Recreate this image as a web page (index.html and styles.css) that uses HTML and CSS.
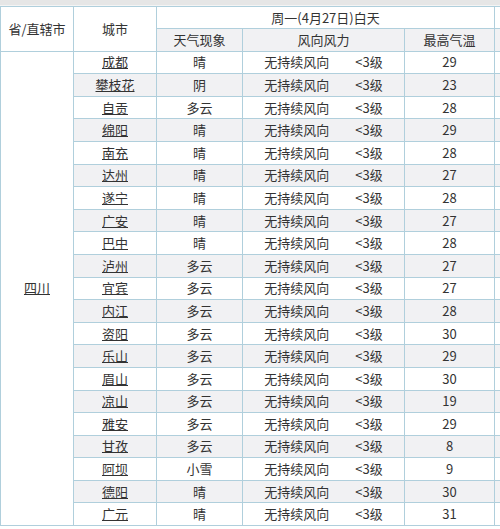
FILE: index.html
```html
<!DOCTYPE html>
<html lang="zh">
<head>
<meta charset="utf-8">
<link rel="stylesheet" href="styles.css">
</head>
<body>
<div class="frame">
<div class="strip"></div>
<table class="weather">
  <colgroup>
    <col class="c-prov"><col class="c-city"><col class="c-wx"><col class="c-wind"><col class="c-temp"><col class="c-next">
  </colgroup>
  <thead>
    <tr class="h1">
      <th rowspan="2" class="white">省/直辖市</th>
      <th rowspan="2" class="white">城市</th>
      <th colspan="3" class="white">周一(4月27日)白天</th>
      <th class="white"></th>
    </tr>
    <tr class="h2">
      <th>天气现象</th>
      <th>风向风力</th>
      <th>最高气温</th>
      <th></th>
    </tr>
  </thead>
  <tbody>
    <tr><td rowspan="21" class="prov"><a href="#">四川</a></td><td><a href="#">成都</a></td><td>晴</td><td class="wind"><span class="dir">无持续风向</span><span>&lt;3级</span></td><td>29</td><td></td></tr>
    <tr class="alt"><td><a href="#">攀枝花</a></td><td>阴</td><td class="wind"><span class="dir">无持续风向</span><span>&lt;3级</span></td><td>23</td><td></td></tr>
    <tr><td><a href="#">自贡</a></td><td>多云</td><td class="wind"><span class="dir">无持续风向</span><span>&lt;3级</span></td><td>28</td><td></td></tr>
    <tr class="alt"><td><a href="#">绵阳</a></td><td>晴</td><td class="wind"><span class="dir">无持续风向</span><span>&lt;3级</span></td><td>29</td><td></td></tr>
    <tr><td><a href="#">南充</a></td><td>晴</td><td class="wind"><span class="dir">无持续风向</span><span>&lt;3级</span></td><td>28</td><td></td></tr>
    <tr class="alt"><td><a href="#">达州</a></td><td>晴</td><td class="wind"><span class="dir">无持续风向</span><span>&lt;3级</span></td><td>27</td><td></td></tr>
    <tr><td><a href="#">遂宁</a></td><td>晴</td><td class="wind"><span class="dir">无持续风向</span><span>&lt;3级</span></td><td>28</td><td></td></tr>
    <tr class="alt"><td><a href="#">广安</a></td><td>晴</td><td class="wind"><span class="dir">无持续风向</span><span>&lt;3级</span></td><td>27</td><td></td></tr>
    <tr><td><a href="#">巴中</a></td><td>晴</td><td class="wind"><span class="dir">无持续风向</span><span>&lt;3级</span></td><td>28</td><td></td></tr>
    <tr class="alt"><td><a href="#">泸州</a></td><td>多云</td><td class="wind"><span class="dir">无持续风向</span><span>&lt;3级</span></td><td>27</td><td></td></tr>
    <tr><td><a href="#">宜宾</a></td><td>多云</td><td class="wind"><span class="dir">无持续风向</span><span>&lt;3级</span></td><td>27</td><td></td></tr>
    <tr class="alt"><td><a href="#">内江</a></td><td>多云</td><td class="wind"><span class="dir">无持续风向</span><span>&lt;3级</span></td><td>28</td><td></td></tr>
    <tr><td><a href="#">资阳</a></td><td>多云</td><td class="wind"><span class="dir">无持续风向</span><span>&lt;3级</span></td><td>30</td><td></td></tr>
    <tr class="alt"><td><a href="#">乐山</a></td><td>多云</td><td class="wind"><span class="dir">无持续风向</span><span>&lt;3级</span></td><td>29</td><td></td></tr>
    <tr><td><a href="#">眉山</a></td><td>多云</td><td class="wind"><span class="dir">无持续风向</span><span>&lt;3级</span></td><td>30</td><td></td></tr>
    <tr class="alt"><td><a href="#">凉山</a></td><td>多云</td><td class="wind"><span class="dir">无持续风向</span><span>&lt;3级</span></td><td>19</td><td></td></tr>
    <tr><td><a href="#">雅安</a></td><td>多云</td><td class="wind"><span class="dir">无持续风向</span><span>&lt;3级</span></td><td>29</td><td></td></tr>
    <tr class="alt"><td><a href="#">甘孜</a></td><td>多云</td><td class="wind"><span class="dir">无持续风向</span><span>&lt;3级</span></td><td>8</td><td></td></tr>
    <tr><td><a href="#">阿坝</a></td><td>小雪</td><td class="wind"><span class="dir">无持续风向</span><span>&lt;3级</span></td><td>9</td><td></td></tr>
    <tr class="alt"><td><a href="#">德阳</a></td><td>晴</td><td class="wind"><span class="dir">无持续风向</span><span>&lt;3级</span></td><td>30</td><td></td></tr>
    <tr><td><a href="#">广元</a></td><td>晴</td><td class="wind"><span class="dir">无持续风向</span><span>&lt;3级</span></td><td>31</td><td></td></tr>
  </tbody>
</table>
</div>
</body>
</html>
```

FILE: styles.css
```css
html, body {
  margin: 0;
  padding: 0;
  overflow: hidden;
  background: #ffffff;
}
body {
  font-family: "Noto Sans CJK SC", "Noto Sans", sans-serif;
  font-size: 13px;
  color: #333333;
}
.frame {
  width: 500px;
  height: 529px;
  overflow: hidden;
}
.strip {
  height: 5px;
  background: #e6e6e6;
  border-bottom: 1px solid #f4f4f4;
}
.weather {
  border-collapse: collapse;
  table-layout: fixed;
  width: 600px;
}
.c-prov { width: 73px; }
.c-city { width: 83px; }
.c-wx { width: 86px; }
.c-wind { width: 162px; }
.c-temp { width: 90px; }
.c-next { width: 106px; }
.weather th, .weather td {
  border: 1px solid #b0cfdc;
  padding: 0;
  text-align: center;
  font-weight: normal;
  line-height: 20px;
  white-space: nowrap;
  overflow: hidden;
}
.weather tr { height: 22.6px; }
.weather tr.h1 { height: 22px; }
.weather tr.h2 th { background: #f1f1f3; }
.weather th.white { background: #ffffff; }
.weather tr.alt td { background: #f1f1f3; }
.weather td.prov { background: #ffffff; }
.weather a {
  color: #333333;
  text-decoration: underline;
}
.wind .dir {
  margin-right: 26px;
}
```
